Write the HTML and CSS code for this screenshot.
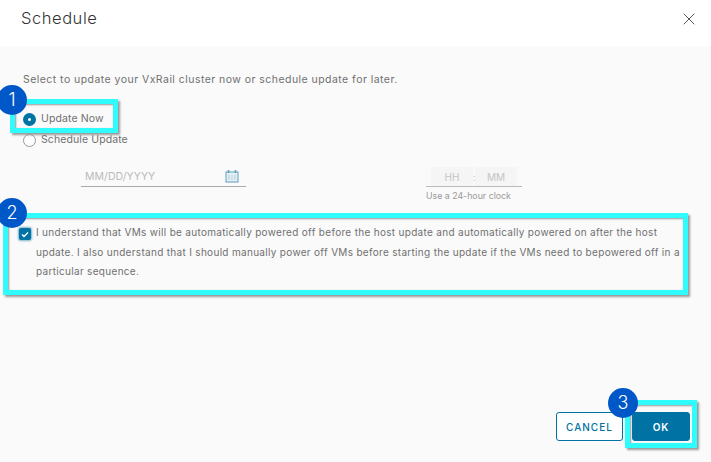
FILE: index.html
```html
<!DOCTYPE html>
<html lang="en">
<head>
<meta charset="utf-8">
<title>Schedule</title>
<link rel="stylesheet" href="styles.css">
</head>
<body>
<div class="dialog">
  <header class="dialog-header">
    <h1 class="dialog-title">Schedule</h1>
    <button class="close-btn" aria-label="Close">
      <svg width="12" height="12" viewBox="0 0 12 12"><path d="M.7.7l10.6 10.6M11.3.7L.7 11.3" stroke="#565656" stroke-width="1" fill="none"/></svg>
    </button>
  </header>
  <main class="dialog-body">
    <p class="intro">Select to update your VxRail cluster now or schedule update for later.</p>
    <div class="radio-group">
      <label class="radio-row"><span class="radio radio-on"></span>Update Now</label>
      <label class="radio-row"><span class="radio"></span>Schedule Update</label>
    </div>
    <div class="schedule-row">
      <div class="date-field">
        <span>MM/DD/YYYY</span>
        <svg class="cal" width="14" height="13" viewBox="0 0 14 13"><rect x="1" y="2" width="12" height="10" fill="#e6f1f6" stroke="#5e9dba"/><path d="M3.500 0v3M10.500 0v3" stroke="#5e9dba" stroke-width="1.500"/><path d="M4 5v5M7 5v5M10 5v5" stroke="#a9cbdb"/></svg>
      </div>
      <div class="time-block">
        <div class="time-field"><span class="time-cell">HH</span><span class="time-sep">:</span><span class="time-cell">MM</span></div>
        <div class="hint">Use a 24-hour clock</div>
      </div>
    </div>
    <div class="consent">
      <span class="checkbox"><svg width="8" height="7" viewBox="0 0 8 7"><path d="M1 3.500l2 2 4-4" stroke="#fff" stroke-width="1.300" fill="none"/></svg></span>
      <p class="consent-text">I understand that VMs will be automatically powered off before the host update and automatically powered on after the host update. I also understand that I should manually power off VMs before starting the update if the VMs need to bepowered off in a particular sequence.</p>
    </div>
    <footer class="dialog-footer">
      <button class="btn btn-outline">CANCEL</button>
      <button class="btn btn-primary">OK</button>
    </footer>
  </main>
  <div class="callout callout-1"></div>
  <div class="callout callout-2"></div>
  <div class="callout callout-3"></div>
  <div class="badge badge-1">1</div>
  <div class="badge badge-2">2</div>
  <div class="badge badge-3">3</div>
</div>
</body>
</html>
```
FILE: styles.css
```css
* { box-sizing: border-box; }
html, body { margin: 0; padding: 0; }
body { width: 711px; height: 462px; overflow: hidden; background: #fafafa; font-family: "Inter", "Open Sans", sans-serif; color: #666; }
.dialog { position: relative; width: 711px; height: 462px; }
.dialog-header { height: 46px; background: #fff; display: flex; justify-content: space-between; align-items: center; padding: 0 16px 0 21px; }
.dialog-title { margin: 0 0 10px; font-size: 16.500px; font-weight: 300; color: #333; letter-spacing: 0.550px; line-height: 24px; }
.close-btn { border: 0; background: none; padding: 0; display: flex; position: relative; top: -4px; }
.dialog-body { height: 416px; display: flex; flex-direction: column; padding: 26px 21px 0 23px; }
.intro { margin: 0; font-size: 10.500px; line-height: 16px; letter-spacing: 0.455px; color: #707070; }
.radio-group { margin-top: 23px; display: flex; flex-direction: column; gap: 5px; }
.radio-row { display: flex; align-items: center; gap: 5px; font-size: 10.500px; line-height: 16px; letter-spacing: 0.100px; height: 16px; color: #707070; }
.radio { width: 13px; height: 13px; border-radius: 50%; border: 1px solid #999; background: #fff; flex: none; }
.radio-on { border: 5px solid #0072a3; background: #fff; }
.schedule-row { display: flex; margin-top: 19px; margin-left: 58px; }
.date-field { width: 165px; height: 20px; border-bottom: 1px solid #aaa; display: flex; justify-content: space-between; align-items: center; padding: 0 7px 0 4px; font-size: 10.500px; letter-spacing: 0.050px; color: #bbb; }
.cal { margin-top: -1px; }
.time-block { margin-left: 180px; width: 96px; }
.time-field { height: 20px; border-bottom: 1px solid #bbb; display: flex; justify-content: center; align-items: center; font-size: 10px; color: #c4c4c4; }
.time-cell { width: 42px; height: 19px; background: #f5f5f5; display: flex; align-items: center; justify-content: center; }
.time-sep { width: 2px; text-align: center; }
.hint { font-size: 8.800px; line-height: 13px; margin-top: 2px; color: #999; }
.consent { display: flex; margin-top: 20px; margin-left: -4px; gap: 5px; }
.checkbox { width: 12px; height: 12px; margin-top: 6px; flex: none; background: #0072a3; border-radius: 2px; display: flex; align-items: center; justify-content: center; box-shadow: 0 0 2px 1px #7fb4cc; }
.consent-text { margin: 1px 0 0; width: 645px; font-size: 10px; line-height: 19.500px; letter-spacing: 0.310px; color: #707070; }
.dialog-footer { margin-top: auto; margin-bottom: 21px; display: flex; justify-content: flex-end; gap: 9px; }
.btn { height: 29px; font-family: inherit; font-size: 10px; font-weight: 600; letter-spacing: 1px; border-radius: 3px; padding: 0; }
.btn-outline { width: 67px; background: #fff; border: 1px solid #0072a3; color: #0072a3; font-weight: 500; }
.btn-primary { width: 58px; background: #0072a3; border: 1px solid #0072a3; color: #fff; }
.callout { position: absolute; border: 5px solid #2ffcfc; box-shadow: 2px 2px 2px #999, inset 1px 1px 2px #999; }
.callout-1 { left: 10px; top: 99px; width: 108px; height: 34px; }
.callout-2 { left: 3px; top: 213px; width: 685px; height: 82px; }
.callout-3 { left: 625px; top: 400px; width: 72px; height: 48px; }
.badge { position: absolute; width: 30px; height: 30px; border-radius: 50%; background: #0057c8; color: #fff; font-size: 18px; line-height: 30px; text-align: center; font-family: "Inter", sans-serif; font-weight: 300; }
.badge-1 { left: -3px; top: 85px; }
.badge-2 { left: -3px; top: 198px; }
.badge-3 { left: 608px; top: 388px; }
```
